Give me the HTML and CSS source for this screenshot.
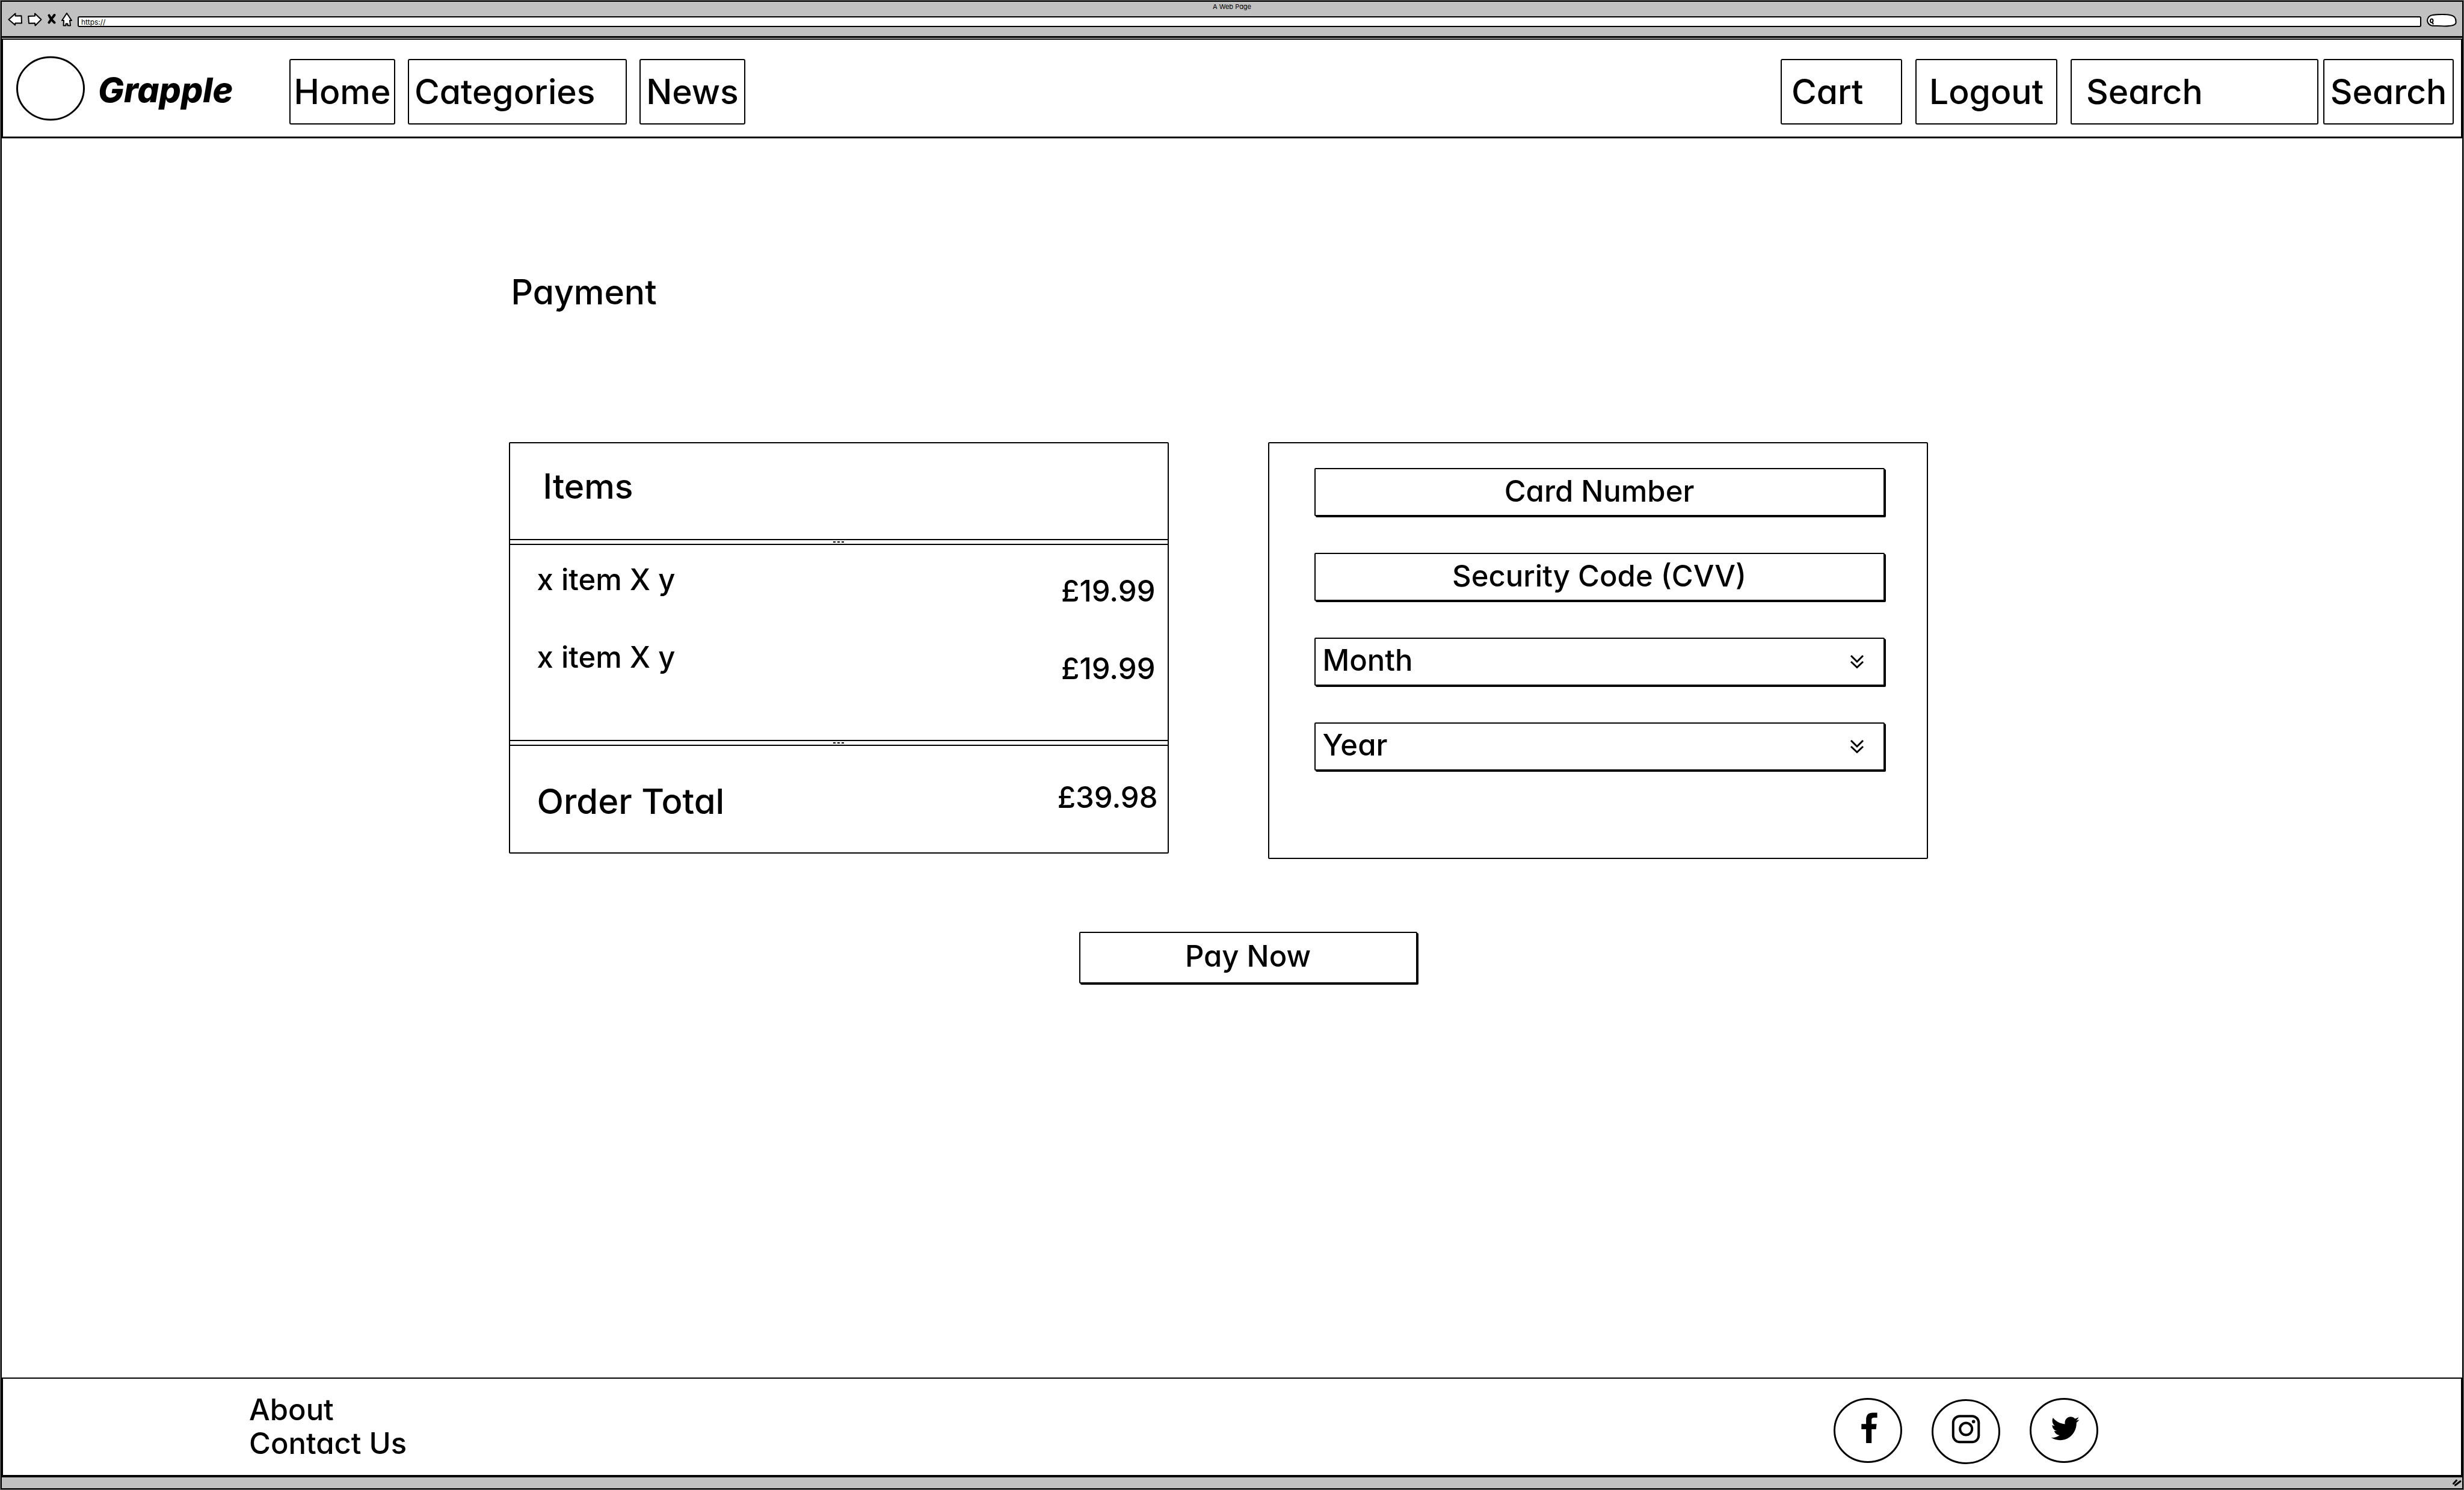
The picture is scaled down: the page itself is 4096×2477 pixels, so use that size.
FILE: index.html
```html
<!DOCTYPE html>
<html lang="en">
<head>
<meta charset="utf-8">
<title>A Web Page</title>
<link rel="stylesheet" href="styles.css">
</head>
<body>
<div class="frame">
  <div class="chrome">
    <div class="chrome-title">A Web Page</div>
    <div class="toolbar">
      <button class="tool" type="button" aria-label="Back"><svg width="24" height="24" viewBox="0 0 24 24"><path d="M1.500 11.500 12.500 1.500V5.500L22.500 5.200 23 17.500H12.500L12 20.500Z"/></svg></button>
      <button class="tool" type="button" aria-label="Forward"><svg width="24" height="24" viewBox="0 0 24 24"><path d="M22.500 11.500 12 1.500V5.500L1.200 6 2 17.800 12 17.500 12.500 21.500Z"/></svg></button>
      <button class="tool" type="button" aria-label="Stop"><svg width="14" height="24" viewBox="0 0 14 24"><path class="cross" d="M2.500 4.500C5 10 8.500 14 11.500 16.500M11.500 4C8 9 5 12 2.500 16.500"/></svg></button>
      <button class="tool" type="button" aria-label="Home"><svg width="18" height="24" viewBox="0 0 18 24"><path d="M9 1 1 13H4L3.500 21.500H7.500V18.500H10.500V21.500H15L14 13H17Z"/></svg></button>
      <input class="address" type="text" aria-label="Address" value="https://">
      <button class="quick-search" type="button" aria-label="Find"><svg width="50" height="22" viewBox="0 0 50 22"><path d="M10 2C20 .5 34 .5 41 2.500 48 4 49 9 48.500 15 47.500 20 36 20.500 29 20.500 21 19.500 12 20.500 8 19.500 .5 17 0 10 2.500 6.500 4 3.500 7 2.500 10 2Z"/><path class="lens" d="M8.500 8.500C5.500 8 5 14.500 8 14.500 11 14.500 11.500 8.500 8.500 8.500M9.500 14.500 11 17.500"/></svg></button>
    </div>
  </div>

  <header class="site-header">
    <a class="brand" href="#">
      <svg class="logo" width="114" height="108" viewBox="0 0 114 108"><ellipse cx="57" cy="54" rx="55.500" ry="52"/></svg>
      <span>Grapple</span>
    </a>
    <nav class="nav">
      <a class="box narrow" href="#">Home</a>
      <a class="box categories" href="#">Categories</a>
      <a class="box narrow" href="#">News</a>
    </nav>
    <div class="account">
      <a class="box cart" href="#">Cart</a>
      <a class="box logout" href="#">Logout</a>
      <form class="search">
        <input class="box query" type="text" aria-label="Search" placeholder="Search">
        <button class="box submit" type="button">Search</button>
      </form>
    </div>
  </header>

  <main class="main">
    <h1>Payment</h1>
    <div class="columns">
      <section class="card order">
        <h2>Items</h2>
        <div class="divider"><i></i><i></i><i></i></div>
        <table class="items">
          <tbody>
            <tr><td>x item X y</td><td class="price">£19.99</td></tr>
            <tr><td>x item X y</td><td class="price">£19.99</td></tr>
          </tbody>
        </table>
        <div class="divider"><i></i><i></i><i></i></div>
        <div class="total"><span class="total-label">Order Total</span><span>£39.98</span></div>
      </section>
      <form class="card payment" id="payment">
        <input class="field" type="text" aria-label="Card Number" placeholder="Card Number">
        <input class="field" type="text" aria-label="Security Code (CVV)" placeholder="Security Code (CVV)">
        <div class="picker">
          <select class="field" aria-label="Month"><option>Month</option></select>
          <svg width="24" height="24" viewBox="0 0 24 24"><path d="M2 2 12 12 22 2M2 12 12 21.500 22 12"/></svg>
        </div>
        <div class="picker">
          <select class="field" aria-label="Year"><option>Year</option></select>
          <svg width="24" height="24" viewBox="0 0 24 24"><path d="M2 2 12 12 22 2M2 12 12 21.500 22 12"/></svg>
        </div>
      </form>
    </div>
    <button class="field pay" type="submit" form="payment">Pay Now</button>
  </main>

  <footer class="site-footer">
    <nav class="links">
      <a href="#">About</a>
      <a href="#">Contact Us</a>
    </nav>
    <div class="social">
      <a href="#" aria-label="Facebook"><svg width="114" height="110" viewBox="0 0 114 110"><ellipse cx="57" cy="54" rx="55.500" ry="52.500"/><path d="M72.600 24.600V32.700H67Q63.200 32.700 63.200 36.400V43.200H71.600L70.600 52H63.200V75H54.100V52H46.300V43.200H54.100V36Q54.100 24.600 65.400 24.600Z"/></svg></a>
      <a href="#" aria-label="Instagram"><svg width="114" height="110" viewBox="0 0 114 110"><ellipse cx="57" cy="56" rx="55.500" ry="52.500"/><rect class="line" x="35.800" y="30.300" width="42.500" height="43" rx="11"/><ellipse class="line" cx="57.200" cy="51.600" rx="10" ry="10"/><circle cx="69.700" cy="39.200" r="2.800"/></svg></a>
      <a href="#" aria-label="Twitter"><svg width="114" height="110" viewBox="0 0 114 110"><ellipse cx="57" cy="54" rx="55.500" ry="52.500"/><path transform="translate(35.600 26.800) scale(.0918 .0937)" d="M459.370 151.716c.325 4.548.325 9.097.325 13.645 0 138.720-105.583 298.558-298.558 298.558-59.452 0-114.680-17.219-161.137-47.106 8.447.974 16.568 1.299 25.340 1.299 49.055 0 94.213-16.568 130.274-44.832-46.132-.975-84.792-31.188-98.112-72.772 6.498.974 12.995 1.624 19.818 1.624 9.421 0 18.843-1.300 27.614-3.573-48.081-9.747-84.143-51.980-84.143-102.985v-1.299c13.969 7.797 30.214 12.670 47.431 13.319-28.264-18.843-46.781-51.005-46.781-87.391 0-19.492 5.197-37.360 14.294-52.954 51.655 63.675 129.300 105.258 216.365 109.807-1.624-7.797-2.599-15.918-2.599-24.040 0-57.828 46.782-104.934 104.934-104.934 30.213 0 57.502 12.670 76.670 33.137 23.715-4.548 46.456-13.320 66.599-25.340-7.798 24.366-24.366 44.833-46.132 57.827 21.117-2.273 41.584-8.122 60.426-16.243-14.292 20.791-32.161 39.308-52.628 54.253z"/></svg></a>
    </div>
  </footer>
  <div class="status"><svg width="16" height="12" viewBox="0 0 16 12"><path d="M1.500 7.500 6.500 2M4.500 10 13 3.500"/></svg></div>
</div>
</body>
</html>
```
FILE: styles.css
```css
* { box-sizing: border-box; }
html { background: #777; }
body { margin: 0; color: #000; font-family: Inter, "Liberation Sans", sans-serif; font-size: 49px; font-weight: 500; line-height: 58px; font-feature-settings: "cv11"; }
a { color: inherit; text-decoration: none; }
input, button, select { font: inherit; font-feature-settings: inherit; color: inherit; margin: 0; border-radius: 0; background: #fff; }
input::placeholder { color: #000; opacity: 1; }
svg { display: block; }

.frame { display: flex; flex-direction: column; min-height: calc(100vh - 2px); margin: 1px; border: 2px solid #000; background: #fff; }

/* Browser bar */
.chrome { height: 60px; background: #c1c1c1; border-bottom: 3px solid #000; font-size: 11px; font-weight: 400; line-height: 16px; flex: none; }
.chrome-title { text-align: center; }
.toolbar { display: flex; align-items: flex-end; gap: 9px; height: 26px; padding: 0 9px 0 10px; }
.tool, .quick-search { border: 0; padding: 0; background: none; }
.tool svg { fill: #fff; stroke: #000; stroke-width: 2; stroke-linejoin: round; }
.tool .cross { fill: none; stroke-width: 4; stroke-linecap: round; }
.address { flex: 1; min-width: 0; height: 18px; padding: 0 4px; border: 2px solid #000; border-radius: 3px; font-size: 12px; line-height: 14px; }
.quick-search svg { fill: #fff; stroke: #000; stroke-width: 2; }
.quick-search .lens { fill: none; }

/* Header */
.site-header { display: flex; align-items: center; height: 166px; margin-top: 1px; padding: 0 12px 0 22px; border: 2px solid #000; border-bottom-width: 3px; font-size: 57px; flex: none; }
.brand { display: flex; align-items: center; gap: 22px; width: 454px; font-weight: 800; font-style: italic; }
.brand span { padding-top: 6px; }
.logo { fill: none; stroke: #000; stroke-width: 3; }
.nav, .account { display: flex; padding-top: 12px; }
.nav { gap: 21px; }
.account { gap: 22px; margin-left: auto; }
.search { display: flex; gap: 8px; }
.box { display: flex; align-items: center; justify-content: center; height: 109px; padding: 0; border: 2px solid #000; border-radius: 3px; }
.narrow { width: 176px; }
.categories { width: 364px; justify-content: flex-start; padding-left: 9px; }
.cart { width: 202px; justify-content: flex-start; padding-left: 16px; }
.logout { width: 236px; }
.query { width: 412px; padding-left: 24px; }
.submit { width: 217px; }

/* Payment page */
.main { flex: 1; padding: 221px 0 120px 20.600%; }
h1, h2 { margin: 0; font-size: 57px; font-weight: 500; line-height: 70px; }
h1 { padding-left: 4px; }
.columns { display: grid; grid-template-columns: 1fr 1fr; align-items: start; gap: 165px; max-width: 2359px; margin-top: 214px; }
.card { border: 2px solid #000; border-radius: 2px; }
.order h2 { height: 159px; padding: 37px 0 0 55px; }
.divider { display: flex; align-items: center; justify-content: center; gap: 3px; height: 10px; border: solid #000; border-width: 2px 0; }
.divider i { width: 4px; height: 2px; background: #000; }
.items { width: 100%; height: 324px; border-collapse: collapse; }
.items tr { height: 129px; }
.items td { padding: 29px 20px 0 45px; vertical-align: top; }
.items tr:last-child { height: 195px; }
.items .price { padding: 48px 20px 0 0; text-align: right; }
.total { display: flex; justify-content: space-between; height: 177px; padding: 57px 16px 0 45px; }
.total-label { font-size: 58px; line-height: 70px; }
.payment { display: flex; flex-direction: column; gap: 61px; height: 693px; padding: 41px 70px 0 75px; }
.field { display: block; width: 100%; height: 80px; padding: 0 0 4px; border: 2px solid #000; border-radius: 2px; box-shadow: 2px 2px 0 #000; text-align: center; }
.picker { display: grid; align-items: center; }
.picker > * { grid-area: 1 / 1; }
.picker select { appearance: none; padding-left: 12px; text-align: left; }
.picker svg { justify-self: end; margin-right: 34px; fill: none; stroke: #000; stroke-width: 3; pointer-events: none; }
.pay { width: 562px; height: 86px; margin: 121px 0 0 948px; }

/* Footer */
.site-footer { display: flex; align-items: center; justify-content: space-between; height: 162px; padding: 0 14.750% 0 10%; border: 2px solid #000; border-bottom: 0; flex: none; }
.links { display: flex; flex-direction: column; line-height: 56px; }
.social { display: flex; gap: 49px; padding-top: 14px; }
.social ellipse, .social .line { fill: none; stroke: #000; stroke-width: 3; }
.social .line { stroke-width: 4; }
.status { display: flex; align-items: center; justify-content: flex-end; height: 22px; background: #c1c1c1; border-top: 4px solid #000; flex: none; }
.status svg { fill: none; stroke: #000; stroke-width: 3; stroke-linecap: round; }
```
